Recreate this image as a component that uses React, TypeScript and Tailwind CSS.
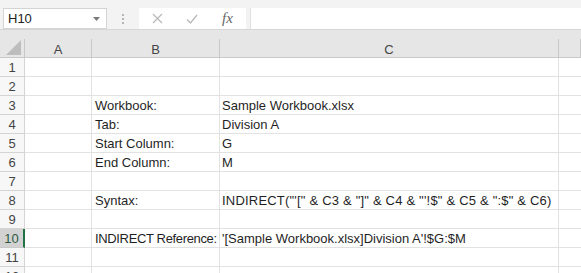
import React from "react";

const cols = [
  { name: "A", w: "w-[67px]" },
  { name: "B", w: "w-[128px]" },
  { name: "C", w: "w-[339px]" },
  { name: "", w: "flex-1" },
];

const rows: { b?: string; c?: string; bt?: string; ct?: string }[] = [
  {},
  {},
  { b: "Workbook:", c: "Sample Workbook.xlsx" },
  { b: "Tab:", c: "Division A" },
  { b: "Start Column:", c: "G" },
  { b: "End Column:", c: "M" },
  {},
  {
    b: "Syntax:",
    c: "INDIRECT(\"'[\" & C3 & \"]\" & C4 & \"'!$\" & C5 & \":$\" & C6)",
    ct: "tracking-[0.2px]",
  },
  {},
  {
    b: "INDIRECT Reference:",
    c: "'[Sample Workbook.xlsx]Division A'!$G:$M",
    bt: "tracking-[-0.35px]",
  },
  {},
  {},
];

function Toolbar() {
  return (
    <div className="h-[30px] bg-[#f3f3f3] border-b border-[#d6d6d6] flex items-start pt-2 pl-[3px]">
      <div className="w-[104px] h-[21px] bg-white border border-[#d4d4d4] flex items-center justify-between pl-1 pr-[6px]">
        <span className="text-[13px] text-[#222]">H10</span>
        <svg width="7" height="4" viewBox="0 0 7 4">
          <path d="M0 0h7L3.5 4z" fill="#7a7a7a" />
        </svg>
      </div>
      <div className="w-[32px] h-[21px] flex flex-col items-center justify-center gap-[2px]">
        <span className="w-[2px] h-[2px] bg-[#b5b5b5]" />
        <span className="w-[2px] h-[2px] bg-[#b5b5b5]" />
        <span className="w-[2px] h-[2px] bg-[#b5b5b5]" />
      </div>
      <div className="w-[107px] h-[21px] bg-white flex items-center">
        <div className="w-[36px] flex justify-center">
          <svg width="11" height="11" viewBox="0 0 11 11">
            <path d="M1 1l9 9M10 1l-9 9" stroke="#b8b8b8" strokeWidth="1.2" fill="none" />
          </svg>
        </div>
        <div className="w-[34px] flex justify-center">
          <svg width="12" height="10" viewBox="0 0 12 10">
            <path d="M1 5.5l3.5 3.5L11 1" stroke="#b8b8b8" strokeWidth="1.3" fill="none" />
          </svg>
        </div>
        <div className="w-[37px] flex justify-center">
          <span className="font-['Liberation_Serif'] italic text-[15px] text-[#666] leading-none">
            fx
          </span>
        </div>
      </div>
      <div className="ml-[4px] flex-1 h-[21px] bg-white border-l border-[#e0e0e0]" />
    </div>
  );
}

function HeaderRow() {
  return (
    <div className="h-[28px] bg-[#e6e6e6] border-b border-[#c9c9c9] flex items-end">
      <div className="w-[25px] h-[18px] border-r border-[#c9c9c9] flex items-end justify-end pr-[3px] pb-[2px]">
        <svg width="15" height="15" viewBox="0 0 15 15">
          <path d="M15 0V15H0z" fill="#bdbdbd" />
        </svg>
      </div>
      {cols.map((c, i) => (
        <div
          key={i}
          className={`${c.w} h-[18px] border-r border-[#c9c9c9] flex items-center justify-center text-[13px] text-[#444] leading-none pt-[2px]`}
        >
          {c.name}
        </div>
      ))}
    </div>
  );
}

export default function App() {
  return (
    <div className="w-[581px] h-[273px] overflow-hidden bg-white font-['Liberation_Sans',Arial,sans-serif]">
      <Toolbar />
      <HeaderRow />
      {rows.map((r, i) => {
        const active = i === 9;
        return (
          <div key={i} className="h-[19px] flex">
            <div
              className={
                active
                  ? "w-[25px] bg-[#d2d2d2] border-r-2 border-[#217346] border-b border-b-[#c9c9c9] text-[#2f5a3f] text-[13px] flex items-center justify-center pt-[1px]"
                  : "w-[25px] bg-[#f7f7f7] border-r border-b border-[#d4d4d4] text-[#444] text-[13px] flex items-center justify-center pt-[1px]"
              }
            >
              {i + 1}
            </div>
            <div className="w-[67px] border-r border-b border-[#e2e2e2]" />
            <div
              className={`w-[128px] border-r border-b border-[#e2e2e2] pl-[3px] text-[13px] text-[#1f1f1f] leading-[19px] whitespace-nowrap ${r.bt ?? ""}`}
            >
              {r.b}
            </div>
            <div
              className={`w-[339px] border-r border-b border-[#e2e2e2] pl-[2px] text-[13px] text-[#1f1f1f] leading-[19px] whitespace-nowrap ${r.ct ?? ""}`}
            >
              {r.c}
            </div>
            <div className="flex-1 border-b border-[#e2e2e2]" />
          </div>
        );
      })}
    </div>
  );
}
